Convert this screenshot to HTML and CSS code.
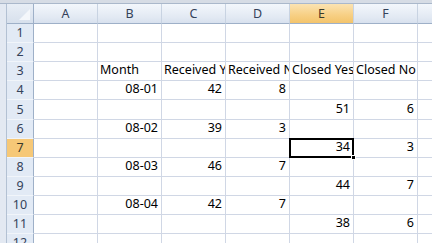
FILE: index.html
```
<!DOCTYPE html>
<html>
<head>
    <title>Sheet1</title>
    <link rel="stylesheet" href="styles.css">
</head>
<body>
    <div class="window">
        <div class="formula-edge"></div>
        <div class="workspace">
            <div class="side-edge"></div>
            <div class="sheet-wrap">
                <table class="sheet">
                    <colgroup>
                        <col class="col-head">
                        <col class="col"><col class="col"><col class="col">
                        <col class="col"><col class="col"><col class="col">
                        <col class="col-rest">
                    </colgroup>
                    <thead>
                        <tr class="head-row">
                            <th class="corner"><span class="corner-mark"></span></th>
                            <th>A</th><th>B</th><th>C</th><th>D</th>
                            <th class="active">E</th><th>F</th><th></th>
                        </tr>
                    </thead>
                    <tbody>
                        <tr><th>1</th><td></td><td></td><td></td><td></td><td></td><td></td><td></td></tr>
                        <tr><th>2</th><td></td><td></td><td></td><td></td><td></td><td></td><td></td></tr>
                        <tr>
                            <th>3</th><td></td><td>Month</td><td>Received Yes</td><td>Received No</td>
                            <td>Closed Yes</td><td>Closed No</td><td></td>
                        </tr>
                        <tr>
                            <th>4</th><td></td><td class="num">08-01</td><td class="num">42</td><td class="num">8</td>
                            <td></td><td></td><td></td>
                        </tr>
                        <tr class="tall">
                            <th>5</th><td></td><td></td><td></td><td></td>
                            <td class="num">51</td><td class="num">6</td><td></td>
                        </tr>
                        <tr>
                            <th>6</th><td></td><td class="num">08-02</td><td class="num">39</td><td class="num">3</td>
                            <td></td><td></td><td></td>
                        </tr>
                        <tr>
                            <th class="active">7</th><td></td><td></td><td></td><td></td>
                            <td class="num selected">34<span class="sel-box"></span><span class="fill-handle"></span></td>
                            <td class="num">3</td><td></td>
                        </tr>
                        <tr>
                            <th>8</th><td></td><td class="num">08-03</td><td class="num">46</td><td class="num">7</td>
                            <td></td><td></td><td></td>
                        </tr>
                        <tr>
                            <th>9</th><td></td><td></td><td></td><td></td>
                            <td class="num">44</td><td class="num">7</td><td></td>
                        </tr>
                        <tr>
                            <th>10</th><td></td><td class="num">08-04</td><td class="num">42</td><td class="num">7</td>
                            <td></td><td></td><td></td>
                        </tr>
                        <tr>
                            <th>11</th><td></td><td></td><td></td><td></td>
                            <td class="num">38</td><td class="num">6</td><td></td>
                        </tr>
                        <tr><th>12</th><td></td><td></td><td></td><td></td><td></td><td></td><td></td></tr>
                    </tbody>
                </table>
            </div>
        </div>
    </div>
</body>
</html>
```

FILE: styles.css
```
body {
    margin: 0;
    font-family: "Noto Sans", "Open Sans", sans-serif;
    background: white;
}
.window {
    width: 432px;
    height: 243px;
    overflow: hidden;
}
.formula-edge {
    height: 3px;
    background: #d6dce5;
    border-bottom: 1px solid #aab8cb;
}
.workspace {
    display: flex;
    height: 239px;
}
.side-edge {
    width: 6px;
    flex: none;
    background: #e3e9f2;
    border-right: 1px solid #b3c1d3;
}
.sheet-wrap {
    flex: 1;
    overflow: hidden;
}
.sheet {
    table-layout: fixed;
    border-collapse: separate;
    border-spacing: 0;
    width: 451px;
    font-size: 12.5px;
    color: #000;
}
.col-head { width: 27px; }
.col { width: 64px; }
.col-rest { width: 40px; }

.sheet tr { height: 19px; }
.sheet tr.head-row { height: 20px; }
.sheet tr.tall { height: 20px; }

.sheet td {
    box-sizing: border-box;
    padding: 0 2px 3px 2px;
    border-right: 1px solid #d0d7e5;
    border-bottom: 1px solid #d0d7e5;
    white-space: nowrap;
    overflow: hidden;
    vertical-align: bottom;
    line-height: 14px;
}
.sheet td.num { text-align: right; padding-right: 3px; }

.sheet th {
    box-sizing: border-box;
    padding: 0;
    font-weight: normal;
    color: #34425a;
    background: #e2eaf5;
    border-right: 1px solid #c3cfdf;
    border-bottom: 1px solid #f1f5fa;
    text-align: center;
    line-height: 14px;
}
.sheet tbody th {
    border-right: 1px solid #9eb0c8;
}
.sheet thead th {
    background: linear-gradient(#f3f7fc, #e2e9f3 70%, #d8e1ee);
    border-bottom: 1px solid #9eb0c8;
    border-right: 1px solid #c8d3e2;
}
.sheet thead th.active {
    background: linear-gradient(#fbe3b2, #f7cf83 60%, #f3c46b);
    color: #3a3a2a;
}
.sheet tbody th.active {
    background: #f6c877;
    color: #3a3a2a;
}
.sheet thead th.corner {
    position: relative;
    background: linear-gradient(#e8eef6, #d7e0ec);
    border-right: 1px solid #9eb0c8;
}
.corner-mark {
    position: absolute;
    right: 3px;
    bottom: 3px;
    width: 0;
    height: 0;
    border-left: 11px solid transparent;
    border-bottom: 11px solid #f4f7fb;
}

.sheet td.selected {
    position: relative;
    overflow: visible;
}
.sel-box {
    position: absolute;
    left: -1px;
    top: -1px;
    right: -1px;
    bottom: -1px;
    border: 2px solid #000;
}
.fill-handle {
    position: absolute;
    right: -3px;
    bottom: -3px;
    width: 5px;
    height: 5px;
    background: #000;
    border: 1px solid #fff;
    box-sizing: border-box;
}
```
